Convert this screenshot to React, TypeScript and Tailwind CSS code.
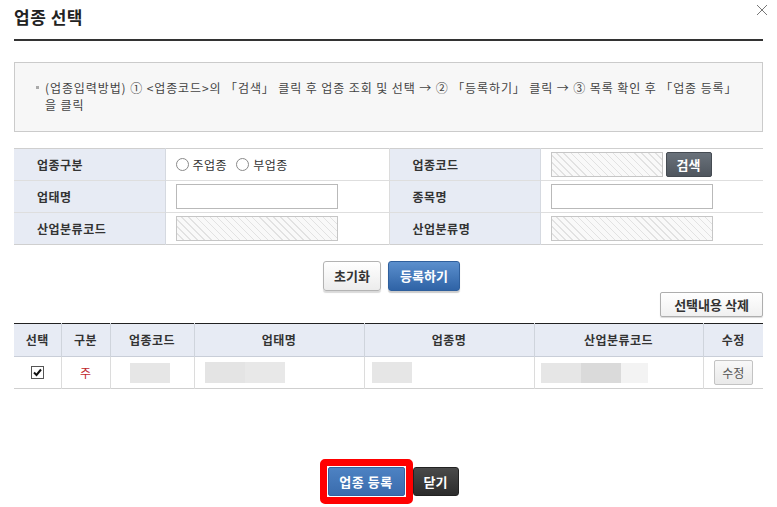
import React from "react";

const font = { fontFamily: '"Noto Sans CJK KR", "Noto Sans", sans-serif' };

function Radio({ label }: { label: string }) {
  return (
    <label className="flex items-center gap-[4px] text-[12px] text-[#333]">
      <span className="inline-block w-[13px] h-[13px] rounded-full border border-[#8a8a8a] bg-white" />
      <span className="tracking-[0.5px]">{label}</span>
    </label>
  );
}

function Hatched({ w }: { w: string }) {
  return (
    <div
      className={`${w} h-[25px] border border-[#c6c6c6] bg-[repeating-linear-gradient(45deg,#f9f9f9_0px,#f9f9f9_4px,#e2e2e2_4px,#e2e2e2_5px)]`}
    />
  );
}

function TextInput() {
  return <div className="w-[162px] h-[25px] border border-[#b9b9b9] bg-white" />;
}

const labelCell = "bg-[#e7ebf4] pl-[23px] text-left text-[12px] font-bold tracking-[0.5px] text-[#333] border-r border-[#d5d9e0]";
const valueCell = "pl-[10px] border-r border-[#dcdcdc] last:border-r-0";

export default function App() {
  return (
    <div className="relative w-[777px] h-[507px] bg-white px-[14px] text-[#333]" style={font}>
      {/* header */}
      <div className="h-[39px] flex items-center pb-[6px]">
        <h1 className="text-[17px] font-bold text-[#222] tracking-[0.5px]">업종 선택</h1>
      </div>
      <button className="absolute right-[9px] top-[4px] w-[12px] h-[12px]">
        <svg viewBox="0 0 12 12" className="w-[12px] h-[12px]">
          <path d="M1 1L11 11M11 1L1 11" stroke="#777" strokeWidth="1" />
        </svg>
      </button>
      <div className="h-[2px] bg-[#333]" />

      {/* info box */}
      <div className="mt-[21px] h-[70px] border border-[#cbcbcb] bg-[#f7f7f7] pl-[21px] pt-[16px]">
        <div className="flex items-start text-[12px] leading-[17px] text-[#444]">
          <span className="mt-[7px] mr-[6px] w-[3px] h-[3px] shrink-0 bg-[#aaa]" />
          <p className="tracking-[0.9px]">
            <span className="whitespace-nowrap">
              (업종입력방법) ① &lt;업종코드&gt;의 「검색」 클릭 후 업종 조회 및 선택 → ② 「등록하기」 클릭 → ③ 목록 확인 후 「업종 등록」
            </span>
            <br />
            을 클릭
          </p>
        </div>
      </div>

      {/* search form */}
      <table className="mt-[16px] w-full table-fixed border-collapse border-t border-b border-[#cfcfcf]">
        <colgroup>
          <col className="w-[151px]" />
          <col className="w-[224px]" />
          <col className="w-[151px]" />
          <col className="w-[223px]" />
        </colgroup>
        <tbody>
          <tr className="h-[32px] border-b border-[#dedede]">
            <th className={labelCell}>업종구분</th>
            <td className={valueCell}>
              <div className="flex items-center gap-[9px]">
                <Radio label="주업종" />
                <Radio label="부업종" />
              </div>
            </td>
            <th className={labelCell}>업종코드</th>
            <td className={valueCell}>
              <div className="flex items-center gap-[3px]">
                <Hatched w="w-[112px]" />
                <button className="w-[46px] h-[25px] rounded-[2px] bg-[linear-gradient(#6a727b,#4f565e)] border border-[#454b52] text-[13px] font-bold text-white">
                  검색
                </button>
              </div>
            </td>
          </tr>
          <tr className="h-[32px] border-b border-[#dedede]">
            <th className={labelCell}>업태명</th>
            <td className={valueCell}>
              <TextInput />
            </td>
            <th className={labelCell}>종목명</th>
            <td className={valueCell}>
              <TextInput />
            </td>
          </tr>
          <tr className="h-[32px]">
            <th className={labelCell}>산업분류코드</th>
            <td className={valueCell}>
              <Hatched w="w-[162px]" />
            </td>
            <th className={labelCell}>산업분류명</th>
            <td className={valueCell}>
              <Hatched w="w-[162px]" />
            </td>
          </tr>
        </tbody>
      </table>

      {/* form buttons */}
      <div className="mt-[16px] flex justify-center gap-[7px] pl-[6px]">
        <button className="w-[58px] h-[30px] rounded-[3px] border border-[#b3b3b3] bg-[linear-gradient(#ffffff,#ececec)] shadow-[0_2px_1px_rgba(0,0,0,0.15)] text-[13px] font-bold text-[#333]">
          초기화
        </button>
        <button className="w-[72px] h-[30px] rounded-[3px] border border-[#2f5f9c] bg-[linear-gradient(#5b8fcd,#2f63a6)] shadow-[0_2px_1px_rgba(0,0,0,0.2)] text-[13px] font-bold text-white">
          등록하기
        </button>
      </div>

      <div className="mt-[1px] flex justify-end">
        <button className="w-[103px] h-[25px] rounded-[2px] border border-[#aeaeae] bg-[linear-gradient(#ffffff,#f0f0f0)] shadow-[0_1px_1px_rgba(0,0,0,0.15)] text-[13px] font-bold text-[#333]">
          선택내용 삭제
        </button>
      </div>

      {/* list */}
      <table className="mt-[6px] w-full table-fixed border-collapse border-t border-[#222] border-b border-b-[#cfcfcf] text-[12px]">
        <colgroup>
          <col className="w-[47px]" />
          <col className="w-[49px]" />
          <col className="w-[84px]" />
          <col className="w-[170px]" />
          <col className="w-[170px]" />
          <col className="w-[169px]" />
          <col className="w-[60px]" />
        </colgroup>
        <thead>
          <tr className="h-[33px] bg-[#e7ebf4] border-b border-[#c9ced8]">
            {["선택", "구분", "업종코드", "업태명", "업종명", "산업분류코드", "수정"].map((h, i) => (
              <th
                key={h}
                className={`font-bold tracking-[0.5px] text-[#333] text-center ${i < 6 ? "border-r border-[#cfd4dc]" : ""}`}
              >
                {h}
              </th>
            ))}
          </tr>
        </thead>
        <tbody>
          <tr className="h-[32px]">
            <td className="border-r border-[#dcdcdc]">
              <div className="flex justify-center">
                <span className="flex items-center justify-center w-[13px] h-[13px] border border-[#555] bg-white">
                  <svg viewBox="0 0 11 11" className="w-[11px] h-[11px]">
                    <path d="M2 5.5L4.5 8L9 2.5" fill="none" stroke="#111" strokeWidth="2" />
                  </svg>
                </span>
              </div>
            </td>
            <td className="border-r border-[#dcdcdc] text-center text-[#c0272d]">주</td>
            <td className="border-r border-[#dcdcdc]">
              <div className="ml-[19px] w-[40px] h-[20px] bg-[#e6e6e6]" />
            </td>
            <td className="border-r border-[#dcdcdc]">
              <div className="ml-[10px] flex h-[21px]">
                <div className="w-[40px] bg-[#e4e4e4]" />
                <div className="w-[40px] bg-[#e8e8e8]" />
              </div>
            </td>
            <td className="border-r border-[#dcdcdc]">
              <div className="ml-[7px] w-[40px] h-[21px] bg-[#e6e6e6]" />
            </td>
            <td className="border-r border-[#dcdcdc]">
              <div className="ml-[6px] flex h-[20px]">
                <div className="w-[40px] bg-[#e6e6e6]" />
                <div className="w-[40px] bg-[#dadada]" />
                <div className="w-[27px] bg-[#f3f3f3]" />
              </div>
            </td>
            <td>
              <div className="flex justify-center">
                <button className="w-[39px] h-[25px] rounded-[2px] border border-[#c3c3c3] bg-[linear-gradient(#f8f8f8,#e9e9e9)] text-[12px] text-[#555]">
                  수정
                </button>
              </div>
            </td>
          </tr>
        </tbody>
      </table>

      {/* bottom buttons */}
      <div className="mt-[70px] flex justify-center items-center pl-[1px]">
        <div className="rounded-[5px] border-[7px] border-[#ff0000] p-[1px]">
          <button className="block w-[77px] h-[29px] rounded-[2px] border border-[#3262a0] bg-[linear-gradient(#4d82c3,#3a6cad)] text-[13px] font-bold tracking-[0.5px] text-white">
            업종 등록
          </button>
        </div>
        <button className="w-[46px] h-[29px] rounded-[3px] border border-[#222] bg-[linear-gradient(#4a4a4a,#2c2c2c)] text-[13px] font-bold text-white">
          닫기
        </button>
      </div>
    </div>
  );
}
